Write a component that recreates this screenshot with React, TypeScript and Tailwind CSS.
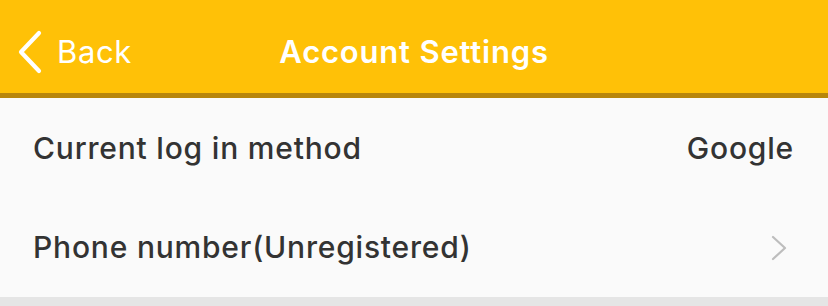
export default function App() {
  return (
    <div className="flex h-[306px] w-full flex-col bg-[#e5e5e5] font-['Inter',sans-serif]">
      <header className="relative flex h-[98px] shrink-0 items-center justify-center border-b-[5px] border-[#b8860b] bg-[#ffc107] pt-[10px]">
        <button className="absolute left-[17px] top-[10px] flex h-[83px] items-center gap-[14px] text-white">
          <svg width="26" height="44" viewBox="0 0 26 44" fill="none">
            <path d="M22 3 L4 22 L22 41" stroke="currentColor" strokeWidth="4.2" strokeLinecap="round" strokeLinejoin="round" />
          </svg>
          <span className="text-[31px] leading-none tracking-[0.6px]">Back</span>
        </button>
        <h1 className="text-[31px] font-semibold leading-none tracking-[0.8px] text-white">Account Settings</h1>
      </header>

      <div className="flex flex-col bg-[#fafafa]">
        <div className="flex h-[100px] items-center justify-between pl-[33px] pr-[34px]">
          <span className="text-[30px] font-medium tracking-[0.8px] text-[#333]">Current log in method</span>
          <span className="text-[30px] font-medium tracking-[0.8px] text-[#333]">Google</span>
        </div>
        <div className="flex h-[99px] items-center justify-between pl-[33px] pr-[40px]">
          <span className="text-[30px] font-medium tracking-[0.8px] text-[#333]">Phone number(Unregistered)</span>
          <svg width="18" height="26" viewBox="0 0 18 26" fill="none" className="text-[#bdbdbd]">
            <path d="M3 2 L15 13 L3 24" stroke="currentColor" strokeWidth="2.2" strokeLinecap="round" strokeLinejoin="round" />
          </svg>
        </div>
      </div>
    </div>
  );
}
